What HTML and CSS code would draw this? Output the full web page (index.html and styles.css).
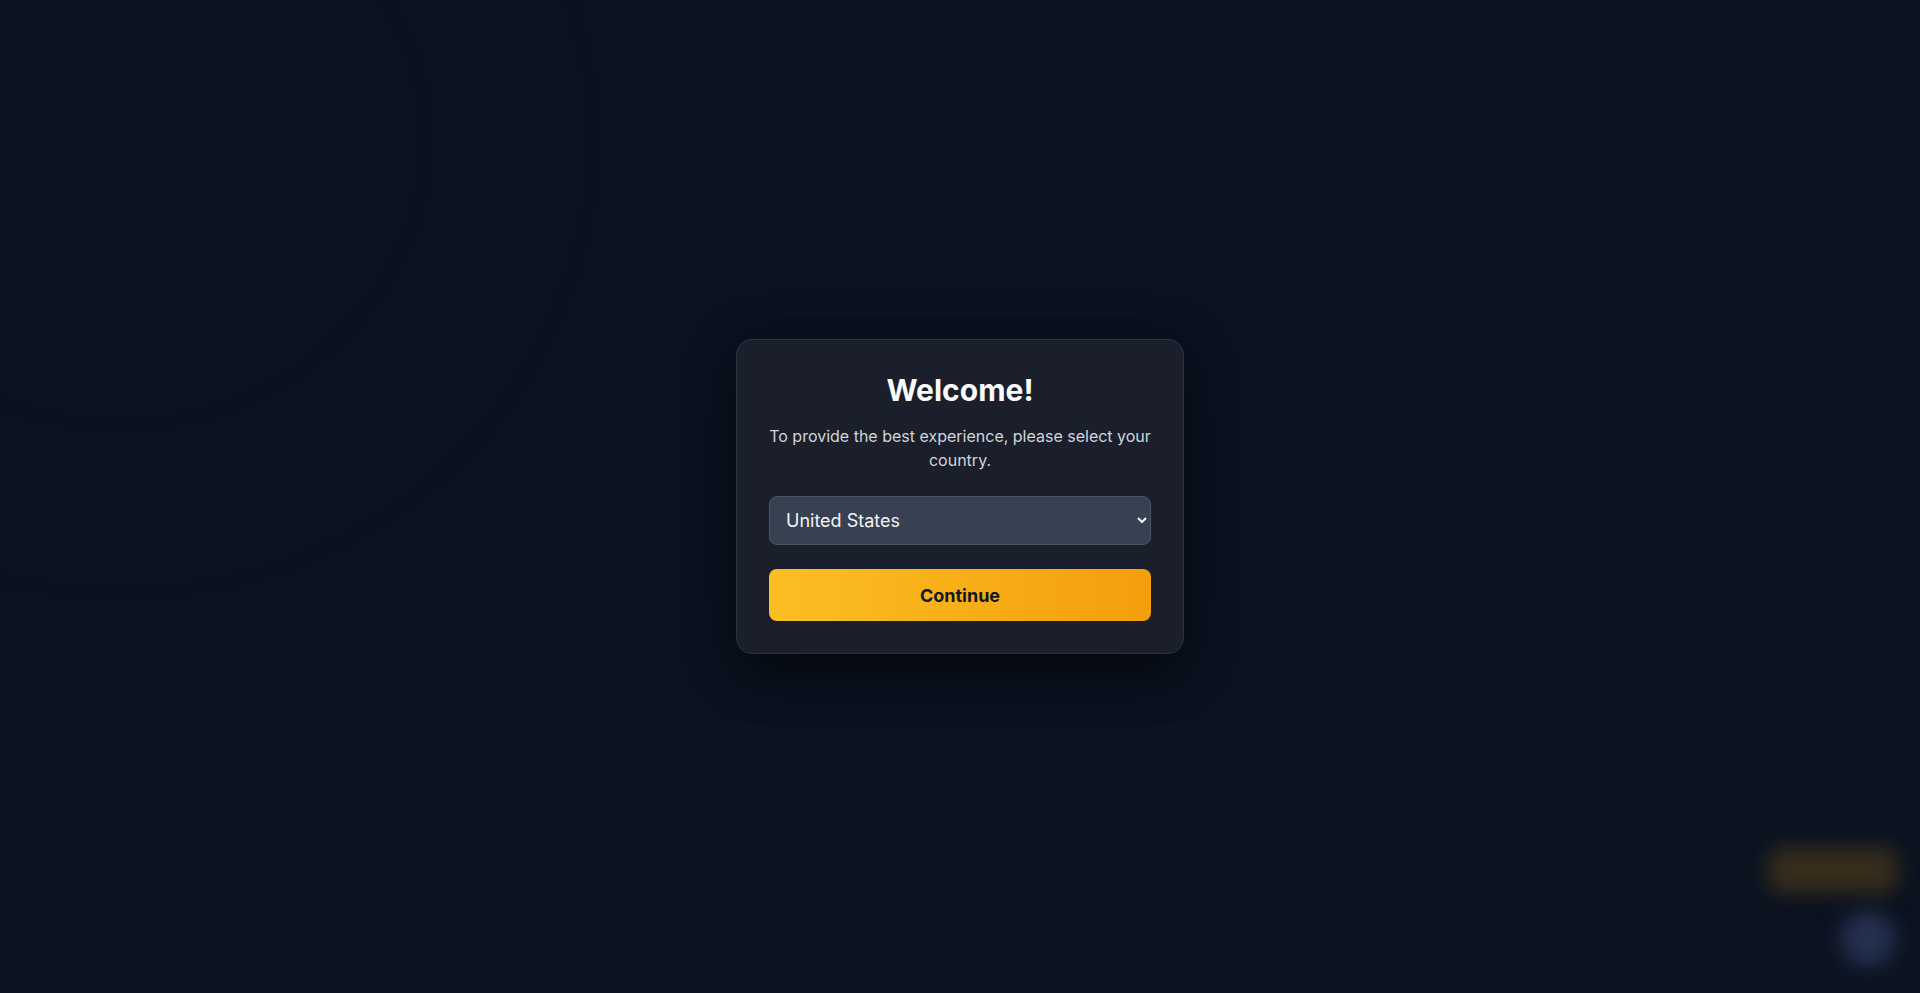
FILE: index.html
```html
<!DOCTYPE html>
<html lang="en">
<head>
<meta charset="utf-8">
<title>Welcome</title>
<link rel="stylesheet" href="styles.css">
</head>
<body>
<div class="page">
  <div class="bg-arc"></div>
  <div class="float-pill"></div>
  <div class="float-chat"></div>
  <div class="overlay">
    <div class="card">
      <h1 class="title">Welcome!</h1>
      <p class="lead">To provide the best experience, please select your country.</p>
      <select class="country">
        <option>United States</option>
        <option>Canada</option>
        <option>United Kingdom</option>
        <option>Australia</option>
      </select>
      <button class="continue">Continue</button>
    </div>
  </div>
</div>
</body>
</html>
```
FILE: styles.css
```css
html, body {
  margin: 0;
  padding: 0;
  height: 100%;
}
body {
  background: #0b1220;
  font-family: Inter, "Noto Sans", sans-serif;
  color: #f1f5f9;
  overflow: hidden;
}
.page {
  position: relative;
  width: 100%;
  height: 100%;
  background: #0b1220;
}
.bg-arc {
  position: absolute;
  left: -300px;
  top: -260px;
  width: 720px;
  height: 680px;
  border-radius: 50%;
  border: 60px solid rgba(20, 22, 36, 0.35);
  filter: blur(30px);
}
.float-pill {
  position: absolute;
  right: 22px;
  bottom: 100px;
  width: 130px;
  height: 46px;
  border-radius: 14px;
  background: #362d1c;
  filter: blur(10px);
}
.float-chat {
  position: absolute;
  right: 24px;
  bottom: 26px;
  width: 56px;
  height: 56px;
  border-radius: 50%;
  background: #24304e;
  filter: blur(10px);
}
.overlay {
  position: absolute;
  inset: 0;
  display: flex;
  align-items: center;
  justify-content: center;
}
.card {
  width: 448px;
  box-sizing: border-box;
  padding: 32px;
  background: #1a1f2b;
  border: 1px solid #2c3342;
  border-radius: 16px;
  box-shadow: 0 25px 50px -12px rgba(0, 0, 0, 0.6), 0 10px 60px rgba(0, 0, 0, 0.25);
  text-align: center;
  display: flex;
  flex-direction: column;
}
.title {
  margin: 0 0 16px;
  font-size: 30px;
  line-height: 36px;
  font-weight: 700;
  color: #f9fafb;
}
.lead {
  margin: 0 0 24px;
  font-size: 16px;
  line-height: 24px;
  color: #d1d5db;
}
.country {
  color-scheme: dark;
  height: 49px;
  box-sizing: border-box;
  padding: 0 12px;
  font-family: Inter, "Noto Sans", sans-serif;
  font-size: 18px;
  color: #f3f4f6;
  background: #374151;
  border: 1px solid #4b5563;
  border-radius: 8px;
  margin-bottom: 24px;
  outline: none;
}
.continue {
  height: 52px;
  border: none;
  border-radius: 8px;
  background: linear-gradient(90deg, #fbbf24, #f59e0b);
  color: #111827;
  font-family: Inter, "Noto Sans", sans-serif;
  font-size: 18px;
  font-weight: 700;
  cursor: pointer;
}
```
